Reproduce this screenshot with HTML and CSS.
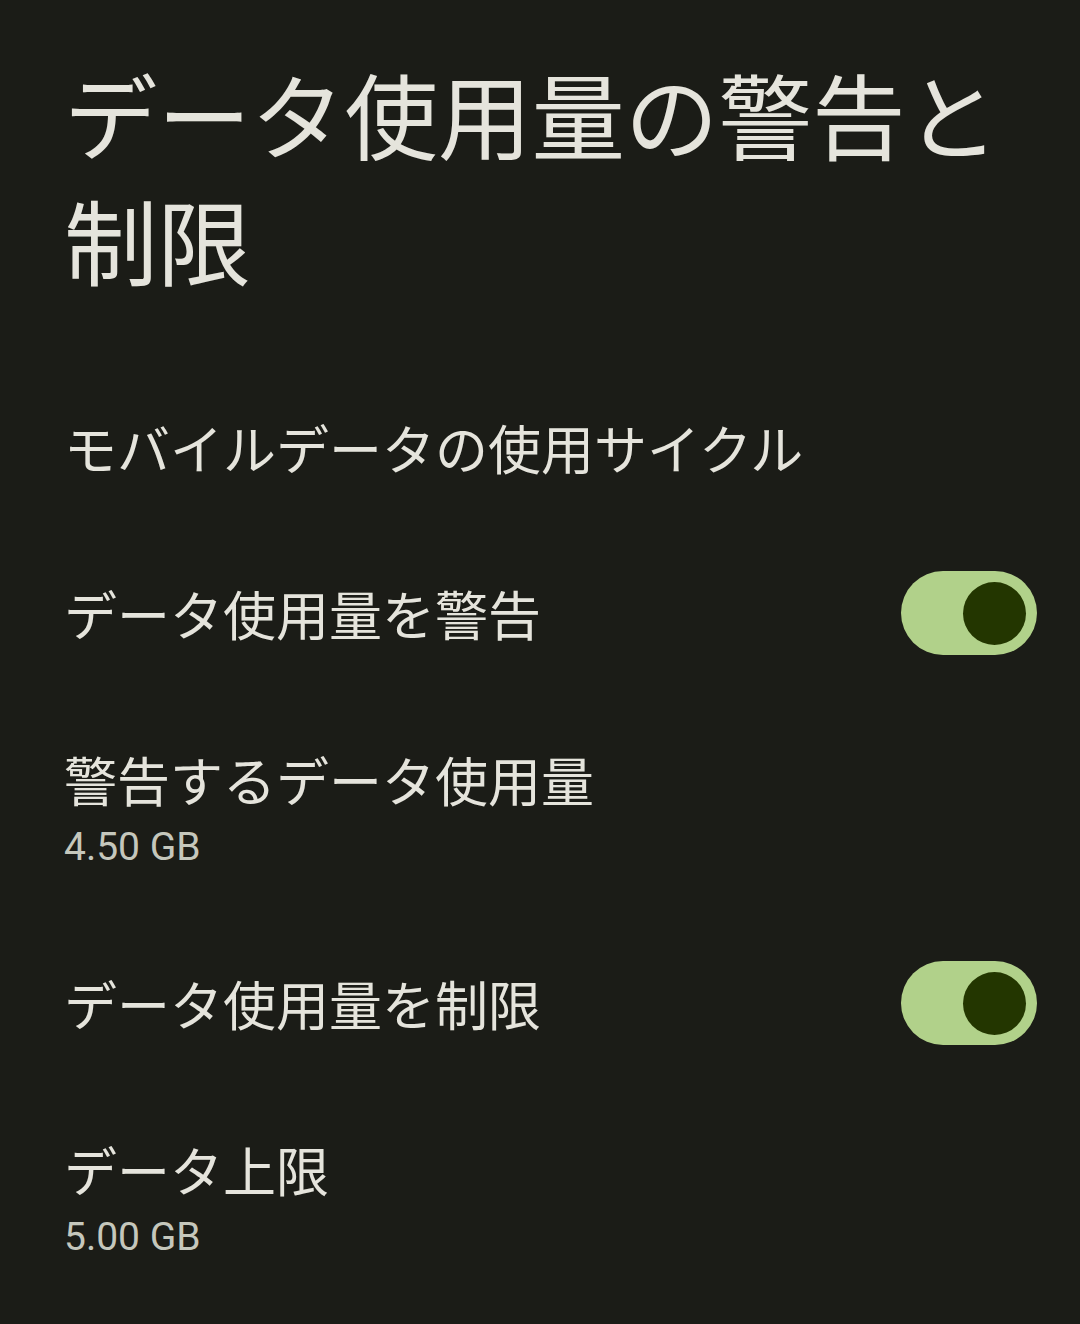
FILE: index.html
```html
<!DOCTYPE html>
<html lang="ja">
<head>
<meta charset="utf-8">
<title>データ使用量の警告と制限</title>
<link rel="stylesheet" href="styles.css">
</head>
<body>
<main class="screen">
  <h1 class="page-title">データ使用量の警告と制限</h1>
  <ul class="prefs">
    <li class="pref">
      <div class="pref-text"><div class="pref-title">モバイルデータの使用サイクル</div></div>
    </li>
    <li class="pref">
      <div class="pref-text"><div class="pref-title">データ使用量を警告</div></div>
      <div class="switch on"><div class="thumb"></div></div>
    </li>
    <li class="pref two-line">
      <div class="pref-text">
        <div class="pref-title">警告するデータ使用量</div>
        <div class="pref-summary">4.50 GB</div>
      </div>
    </li>
    <li class="pref">
      <div class="pref-text"><div class="pref-title">データ使用量を制限</div></div>
      <div class="switch on"><div class="thumb"></div></div>
    </li>
    <li class="pref two-line">
      <div class="pref-text">
        <div class="pref-title">データ上限</div>
        <div class="pref-summary">5.00 GB</div>
      </div>
    </li>
  </ul>
</main>
</body>
</html>
```

FILE: styles.css
```css
html, body {
  margin: 0;
  padding: 0;
  background: #1b1c17;
}
body {
  width: 1080px;
  height: 1324px;
  overflow: hidden;
  font-family: "Noto Sans CJK JP", "Noto Sans", sans-serif;
  color: #e5e4dc;
}
.screen {
  padding: 50px 43px 0 64px;
}
.page-title {
  margin: 0 0 62px 0;
  font-weight: 400;
  font-size: 93.5px;
  line-height: 126px;
  color: #e5e4dc;
}
.prefs {
  list-style: none;
  margin: 0;
  padding: 0;
}
.pref {
  display: flex;
  align-items: center;
  justify-content: space-between;
  box-sizing: border-box;
  min-height: 166px;
  padding: 41px 0;
}
.pref.two-line {
  padding: 48px 0;
}
.pref-text {
  display: flex;
  flex-direction: column;
}
.pref-title {
  font-size: 53px;
  line-height: 70px;
  color: #e5e4dc;
}
.pref-summary {
  margin-top: 8px;
  font-family: Roboto, "Noto Sans", sans-serif;
  font-size: 39px;
  line-height: 50px;
  color: #c5c7bc;
}
.switch {
  width: 136px;
  height: 84px;
  border-radius: 42px;
  background: #b1d18a;
  display: flex;
  align-items: center;
  justify-content: flex-end;
  padding: 0 11px;
  box-sizing: border-box;
}
.thumb {
  width: 63px;
  height: 63px;
  border-radius: 50%;
  background: #233600;
}
```
